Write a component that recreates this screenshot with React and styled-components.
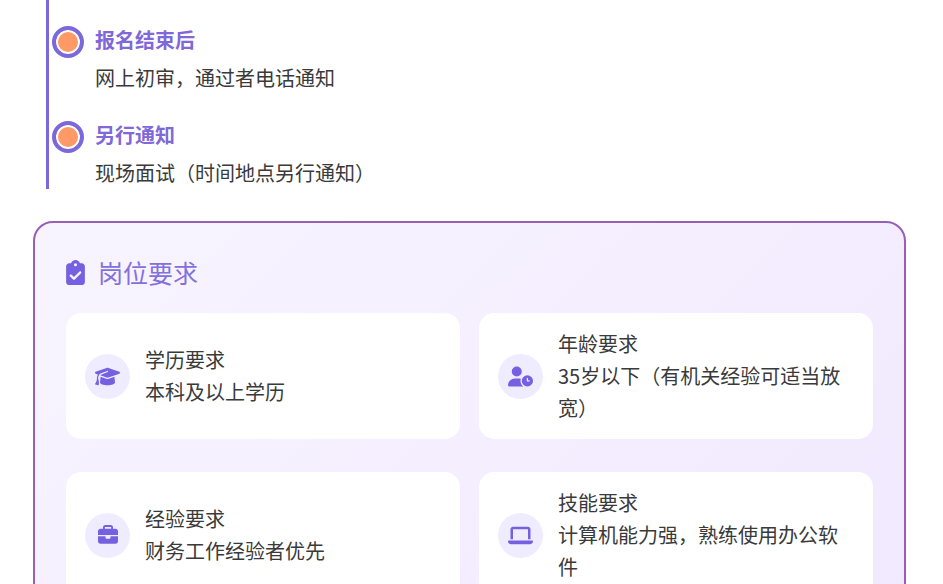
import React from 'react'
import styled, { createGlobalStyle } from 'styled-components'
import { FaClipboardCheck, FaGraduationCap, FaUserClock, FaBriefcase, FaLaptop } from 'react-icons/fa6'

const GlobalStyle = createGlobalStyle`
    html, body {
        margin: 0;
        padding: 0;
        background: #fff;
        overflow: hidden;
    }
    body {
        font-family: "Noto Sans CJK SC", "Noto Sans", sans-serif;
        font-size: 20px;
        line-height: 32px;
        color: #3a3a3a;
    }
`

const Page = styled.div`
    height: 584px;
    padding: 0 37px 0 33px;
    overflow: hidden;
`

const Timeline = styled.div`
    display: flex;
    flex-direction: column;
    gap: 25px;
    margin-left: 13px;
    padding: 24px 0 0 3px;
    border-left: 3px solid #7b68dd;
`

const Step = styled.div`
    display: grid;
    grid-template-columns: 32px 1fr;
    column-gap: 11px;
    row-gap: 6px;
    align-items: center;
`

const Marker = styled.span`
    box-sizing: border-box;
    width: 32px;
    height: 32px;
    margin: 2px 0 -2px;
    border: 4px solid #7b68dd;
    border-radius: 50%;
    background: #ff9a66;
    box-shadow: inset 0 0 0 2px #fff;
`

const StepTitle = styled.div`
    font-weight: 700;
    color: #8068d8;
`

const StepText = styled.div`
    grid-column: 2;
`

const Panel = styled.section`
    margin-top: 32px;
    padding: 30px 31px 30px;
    border: 2px solid #9660b8;
    border-radius: 20px;
    background: linear-gradient(135deg, #f8f4ff, #f1e9fe);
`

const PanelTitle = styled.h2`
    display: flex;
    align-items: center;
    gap: 13px;
    margin: 0 0 22px;
    font-size: 25px;
    line-height: 38px;
    font-weight: 400;
    color: #8370dc;

    svg {
        flex: none;
        width: 19px;
        height: 25px;
        color: #7660e2;
    }
`

const Grid = styled.div`
    display: grid;
    grid-template-columns: 1fr 1fr;
    column-gap: 19px;
    row-gap: 33px;
`

const Item = styled.div`
    display: flex;
    align-items: center;
    gap: 15px;
    min-height: 126px;
    box-sizing: border-box;
    padding: 15px 19px;
    border-radius: 15px;
    background: #fff;
`

const IconCircle = styled.div`
    flex: none;
    display: flex;
    align-items: center;
    justify-content: center;
    width: 45px;
    height: 45px;
    border-radius: 50%;
    background: #f0ecff;
    color: #7660e2;
`

const requirements = [
    { icon: <FaGraduationCap size={25} />, title: '学历要求', text: '本科及以上学历' },
    { icon: <FaUserClock size={25} />, title: '年龄要求', text: '35岁以下（有机关经验可适当放宽）' },
    { icon: <FaBriefcase size={20} />, title: '经验要求', text: '财务工作经验者优先' },
    { icon: <FaLaptop size={25} />, title: '技能要求', text: '计算机能力强，熟练使用办公软件' },
]

const App = () => {
    return <Page>
        <GlobalStyle />
        <Timeline>
            <Step>
                <Marker />
                <StepTitle>报名结束后</StepTitle>
                <StepText>网上初审，通过者电话通知</StepText>
            </Step>
            <Step>
                <Marker />
                <StepTitle>另行通知</StepTitle>
                <StepText>现场面试（时间地点另行通知）</StepText>
            </Step>
        </Timeline>
        <Panel>
            <PanelTitle><FaClipboardCheck />岗位要求</PanelTitle>
            <Grid>
                {requirements.map((item) => (
                    <Item key={item.title}>
                        <IconCircle>{item.icon}</IconCircle>
                        <div>
                            <div>{item.title}</div>
                            <div>{item.text}</div>
                        </div>
                    </Item>
                ))}
            </Grid>
        </Panel>
    </Page>
}

export default App
